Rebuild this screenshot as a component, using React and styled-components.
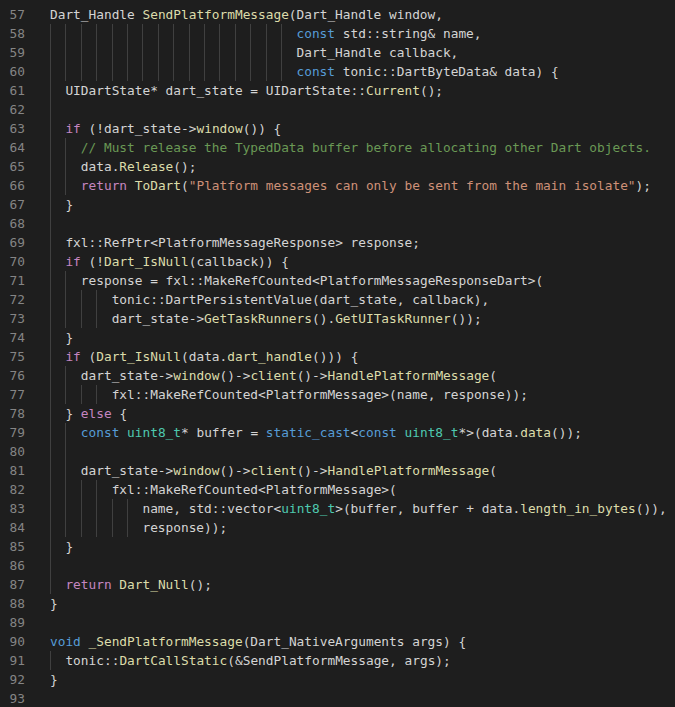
import React from 'react'
import styled, { createGlobalStyle } from 'styled-components'

const GlobalStyle=createGlobalStyle`
  html, body {
    margin: 0;
    padding: 0;
    background: #1e1e1e;
  }
`

const COLORS={
  plain: '#d4d4d4',
  func: '#dcdcaa',
  keyword: '#569cd6',
  control: '#c586c0',
  comment: '#6a9955',
  string: '#ce9178',
  type: '#4ec9b0',
}

const Editor=styled.div`
  height: 100vh;
  overflow: hidden;
  background: #1e1e1e;
  padding-top: 5px;
  box-sizing: border-box;
  font-family: "DejaVu Sans Mono", "Liberation Mono", monospace;
  font-size: 12.8px;
  line-height: 19px;
`

const Row=styled.div`
  display: flex;
  flex-direction: row;
  height: 19px;
  white-space: pre;
`

const LineNumber=styled.span`
  width: 25px;
  flex-shrink: 0;
  text-align: right;
  color: #858585;
`

const Code=styled.span`
  display: flex;
  flex-direction: row;
  margin-left: 25px;
`

const Guide=styled.span`
  display: inline-block;
  width: 2ch;
  height: 19px;
  box-sizing: border-box;
  border-left: 1px solid #404040;
`

const Token=styled.span`
  color: ${p => COLORS[p.$kind]};
`

const SOURCE=[
  'Dart_Handle SendPlatformMessage(Dart_Handle window,',
  '                                const std::string& name,',
  '                                Dart_Handle callback,',
  '                                const tonic::DartByteData& data) {',
  '  UIDartState* dart_state = UIDartState::Current();',
  '',
  '  if (!dart_state->window()) {',
  '    // Must release the TypedData buffer before allocating other Dart objects.',
  '    data.Release();',
  '    return ToDart("Platform messages can only be sent from the main isolate");',
  '  }',
  '',
  '  fxl::RefPtr<PlatformMessageResponse> response;',
  '  if (!Dart_IsNull(callback)) {',
  '    response = fxl::MakeRefCounted<PlatformMessageResponseDart>(',
  '        tonic::DartPersistentValue(dart_state, callback),',
  '        dart_state->GetTaskRunners().GetUITaskRunner());',
  '  }',
  '  if (Dart_IsNull(data.dart_handle())) {',
  '    dart_state->window()->client()->HandlePlatformMessage(',
  '        fxl::MakeRefCounted<PlatformMessage>(name, response));',
  '  } else {',
  '    const uint8_t* buffer = static_cast<const uint8_t*>(data.data());',
  '',
  '    dart_state->window()->client()->HandlePlatformMessage(',
  '        fxl::MakeRefCounted<PlatformMessage>(',
  '            name, std::vector<uint8_t>(buffer, buffer + data.length_in_bytes()),',
  '            response));',
  '  }',
  '',
  '  return Dart_Null();',
  '}',
  '',
  'void _SendPlatformMessage(Dart_NativeArguments args) {',
  '  tonic::DartCallStatic(&SendPlatformMessage, args);',
  '}',
  '',
]

// indent of blank lines, as the editor draws guides through them
const BLANK_INDENT={62: 2, 68: 2, 80: 4, 86: 2}

const CONTROL=['if', 'else', 'return']
const KEYWORDS=['const', 'void', 'static_cast']
const TYPES=['uint8_t']
const NOT_CALLS=['DartPersistentValue']

const tokenize=(text) => {
  const out=[]
  const re=/(\/\/.*$)|("(?:[^"\\]|\\.)*")|([A-Za-z_]\w*)|(\s+|.)/g
  let m
  while ((m=re.exec(text))) {
    if (m[1]) out.push(['comment', m[1]])
    else if (m[2]) out.push(['string', m[2]])
    else if (m[3]) {
      const word=m[3]
      const next=text.slice(re.lastIndex).trimStart()[0]
      let kind='plain'
      if (CONTROL.includes(word)) kind='control'
      else if (KEYWORDS.includes(word)) kind='keyword'
      else if (TYPES.includes(word)) kind='type'
      else if (next === '(' && !NOT_CALLS.includes(word)) kind='func'
      out.push([kind, word])
    } else out.push(['plain', m[4]])
  }
  return out
}

const CodeLine=({number, text}) => {
  const indent=text.length ? text.match(/^ */)[0].length : (BLANK_INDENT[number] || 0)
  const body=text.slice(indent)
  const guides=Array.from({length: Math.floor(indent / 2)})

  return (
    <Row>
      <LineNumber>{number}</LineNumber>
      <Code>
        {guides.map((_, i) => <Guide key={i}/>)}
        <span>
          {tokenize(body).map(([kind, t], i) => <Token key={i} $kind={kind}>{t}</Token>)}
        </span>
      </Code>
    </Row>
  )
}

const App=() => {
  return (
    <>
      <GlobalStyle/>
      <Editor>
        {SOURCE.map((text, i) => <CodeLine key={i} number={57 + i} text={text}/>)}
      </Editor>
    </>
  )
}

export default App
